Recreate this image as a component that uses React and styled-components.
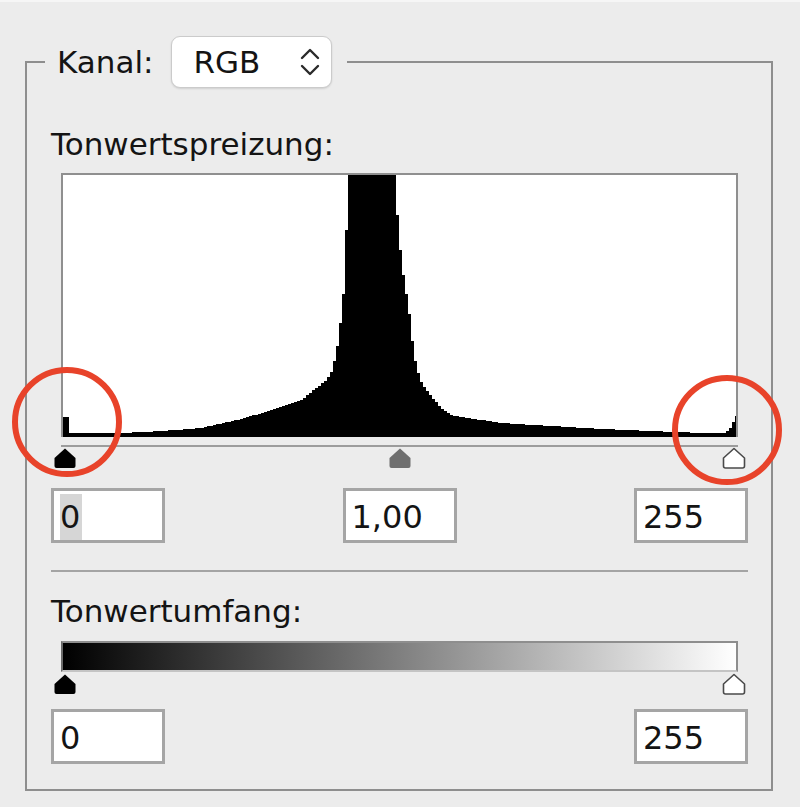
import React from 'react';
import styled, { createGlobalStyle } from 'styled-components';

const GlobalStyle = createGlobalStyle`
  html, body {
    margin: 0;
    padding: 0;
    background: #ececec;
  }
  body {
    font-family: 'DejaVu Sans', 'Liberation Sans', sans-serif;
    color: #141414;
  }
`;

const Page = styled.div`
  position: relative;
  width: 800px;
  height: 807px;
  box-sizing: border-box;
  border-top: 2px solid #f6f6f6;
  background: #ececec;
  overflow: hidden;
`;

const Group = styled.fieldset`
  box-sizing: border-box;
  width: 748px;
  margin: 34px 0 0 25px;
  padding: 0 23px 25px 24px;
  border: 2px solid #8e8e8e;
  min-inline-size: 0;
`;

const Legend = styled.legend`
  margin-left: -6px;
  padding: 0 15px 0 12px;
`;

const LegendRow = styled.div`
  display: flex;
  align-items: center;
  gap: 18px;
`;

const Label = styled.span`
  font-size: 31px;
  line-height: 36px;
  color: #141414;
`;

const Select = styled.div`
  box-sizing: border-box;
  display: flex;
  align-items: center;
  width: 161px;
  height: 52px;
  padding: 0 11px 0 21px;
  background: #fff;
  border: 1px solid #cbcbcb;
  border-radius: 9px;
  box-shadow: 0 1px 2px rgba(0, 0, 0, 0.12);
  font-size: 31px;
  color: #141414;

  svg {
    margin-left: auto;
  }
`;

const Title = styled.div`
  margin-top: ${(p) => p.$top}px;
  font-size: 31px;
  line-height: 36px;
  color: #141414;
`;

const Histogram = styled.div`
  margin: 11px 10px 0;
  height: 262px;
  border: 2px solid #8f8f8f;
  border-bottom: none;
  background: #fff;

  svg {
    display: block;
    width: 100%;
    height: 100%;
  }
`;

const Track = styled.div`
  margin: 8px 10px 0;
  height: 2px;
  background: #9c9c9c;
`;

const Handles = styled.div`
  display: flex;
  justify-content: space-between;
  margin: ${(p) => p.$top}px 2px 0;
  height: 22px;
`;

const Fields = styled.div`
  display: flex;
  justify-content: space-between;
  margin-top: ${(p) => p.$top}px;
`;

const NumberBox = styled.div`
  box-sizing: border-box;
  width: 114px;
  height: 55px;
  padding: 3px 0 0 6px;
  border: 3px solid #a5a5a5;
  background: #fff;
  font-size: 32px;
  line-height: 46px;
  color: #141414;
`;

const Selected = styled.span`
  display: inline-block;
  background: #d6d6d6;
  padding-right: 2px;
`;

const Separator = styled.div`
  margin-top: 27px;
  height: 2px;
  background: #a4a4a4;
`;

const RangeBar = styled.div`
  margin: 12px 10px 0;
  height: 27px;
  border: 2px solid #8e8e8e;
  border-bottom-color: #c4c4c4;
  border-left-color: #6a6a6a;
  background: linear-gradient(to right, #000 0%, #fff 100%);
`;

const Overlay = styled.svg`
  position: absolute;
  left: 0;
  top: 0;
  pointer-events: none;
`;

// rough shape of the histogram: [x, height above the bottom]
const profile = [
  [63, 20], [66, 20], [67, 4], [120, 4], [160, 6], [200, 9], [240, 18],
  [270, 27], [300, 37], [315, 49], [325, 57], [330, 65], [334, 80],
  [337, 97], [340, 122], [343, 154], [345, 207], [347, 265], [394, 265],
  [395, 238], [397, 207], [400, 177], [403, 154], [407, 132], [410, 104],
  [413, 80], [417, 64], [420, 55], [427, 44], [433, 37], [440, 29],
  [450, 22], [467, 19], [500, 14], [550, 11], [600, 8], [650, 6],
  [700, 4], [722, 4], [727, 6], [730, 10], [733, 18], [736, 22],
];

const heightAt = (x) => {
  for (let i = 1; i < profile.length; i++) {
    const [x1, h1] = profile[i];
    const [x0, h0] = profile[i - 1];
    if (x <= x1) return h0 + ((h1 - h0) * (x - x0)) / Math.max(1, x1 - x0);
  }
  return profile[profile.length - 1][1];
};

const histogramPath = () => {
  let d = 'M63 437';
  for (let x = 63; x < 736; x += 3) {
    const y = Math.max(175, Math.round(437 - heightAt(x)));
    d += ` V${y} H${Math.min(736, x + 3)}`;
  }
  return d + ' V437 Z';
};

const Handle = ({ fill = '#000', stroke = 'none' }) => (
  <svg width="24" height="22" viewBox="0 0 24 22">
    <path
      d="M12 1.5 L22.5 11 V19 Q22.5 21 20.5 21 H3.5 Q1.5 21 1.5 19 V11 Z"
      fill={fill}
      stroke={stroke}
      strokeWidth="1.6"
      strokeLinejoin="round"
    />
  </svg>
);

const Chevrons = () => (
  <svg width="20" height="28" viewBox="0 0 20 28">
    <path
      d="M2 10 L10 2 L18 10 M2 18 L10 26 L18 18"
      fill="none"
      stroke="#2a2a2a"
      strokeWidth="2.4"
      strokeLinecap="round"
      strokeLinejoin="round"
    />
  </svg>
);

function App() {
  return (
    <Page>
      <GlobalStyle />
      <Group>
        <Legend>
          <LegendRow>
            <Label>Kanal:</Label>
            <Select>
              RGB
              <Chevrons />
            </Select>
          </LegendRow>
        </Legend>

        <Title $top={38}>Tonwertspreizung:</Title>
        <Histogram>
          <svg viewBox="63 175 673 262" preserveAspectRatio="none" shapeRendering="crispEdges">
            <path d={histogramPath()} fill="#000" />
          </svg>
        </Histogram>
        <Track />
        <Handles $top={0}>
          <Handle />
          <Handle fill="#6f6f6f" />
          <Handle fill="#fff" stroke="#4a4a4a" />
        </Handles>
        <Fields $top={19}>
          <NumberBox><Selected>0</Selected></NumberBox>
          <NumberBox>1,00</NumberBox>
          <NumberBox>255</NumberBox>
        </Fields>

        <Separator />

        <Title $top={21}>Tonwertumfang:</Title>
        <RangeBar />
        <Handles $top={1}>
          <Handle />
          <Handle fill="#fff" stroke="#4a4a4a" />
        </Handles>
        <Fields $top={14}>
          <NumberBox>0</NumberBox>
          <NumberBox>255</NumberBox>
        </Fields>
      </Group>

      <Overlay width="800" height="807" viewBox="0 0 800 807">
        <circle cx="67" cy="420" r="52" fill="none" stroke="#e8432a" strokeWidth="6" />
        <circle cx="727" cy="428" r="52" fill="none" stroke="#e8432a" strokeWidth="6" />
      </Overlay>
    </Page>
  );
}

export default App;
